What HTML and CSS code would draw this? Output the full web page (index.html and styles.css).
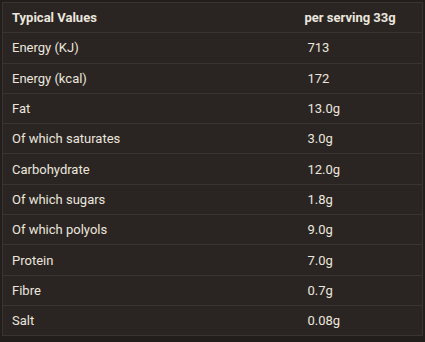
FILE: index.html
```html
<!DOCTYPE html>
<html>
<head>
<meta charset="utf-8">
<link rel="stylesheet" href="styles.css">
</head>
<body>
<div class="wrap">
<table class="nutrition">
<colgroup><col class="c1"><col class="c2"></colgroup>
<thead>
<tr><th class="label">Typical Values</th><th class="value">per serving 33g</th></tr>
</thead>
<tbody>
<tr><td class="label">Energy (KJ)</td><td class="value">713</td></tr>
<tr><td class="label">Energy (kcal)</td><td class="value">172</td></tr>
<tr><td class="label">Fat</td><td class="value">13.0g</td></tr>
<tr><td class="label">Of which saturates</td><td class="value">3.0g</td></tr>
<tr><td class="label">Carbohydrate</td><td class="value">12.0g</td></tr>
<tr><td class="label">Of which sugars</td><td class="value">1.8g</td></tr>
<tr><td class="label">Of which polyols</td><td class="value">9.0g</td></tr>
<tr><td class="label">Protein</td><td class="value">7.0g</td></tr>
<tr><td class="label">Fibre</td><td class="value">0.7g</td></tr>
<tr><td class="label">Salt</td><td class="value">0.08g</td></tr>
</tbody>
</table>
</div>
</body>
</html>
```

FILE: styles.css
```css
html, body {
  margin: 0;
  padding: 0;
  background: #221e1c;
}
.wrap {
  padding: 2px 2px 0 2px;
}
.nutrition {
  width: 421px;
  table-layout: fixed;
  border-collapse: collapse;
  background: #2a2523;
  border: 1px solid #3a3431;
  font-family: Roboto, "Liberation Sans", sans-serif;
  font-size: 13px;
  color: #ebe6dd;
}
.nutrition .c1 {
  width: 293px;
}
.nutrition th,
.nutrition td {
  height: 29.3px;
  padding: 0;
  border-bottom: 1px solid #3a3431;
  text-align: left;
  vertical-align: middle;
  white-space: nowrap;
}
.nutrition th {
  font-weight: 700;
}
.nutrition .label {
  padding-left: 9px;
}
.nutrition th.value {
  padding-left: 9px;
}
.nutrition td.value {
  padding-left: 12px;
}
```
